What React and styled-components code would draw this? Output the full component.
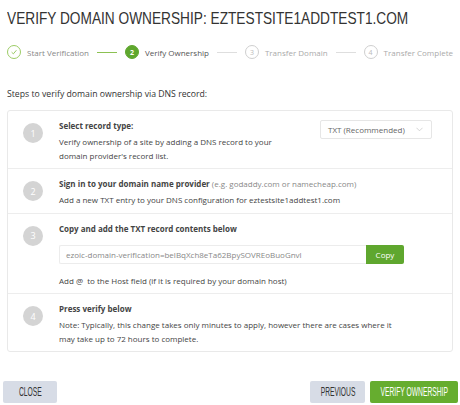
import React from "react";
import styled, { createGlobalStyle } from "styled-components";

const GlobalStyle = createGlobalStyle`
  body {
    margin: 0;
    background: #fff;
    font-family: "Open Sans", "Liberation Sans", sans-serif;
    color: #444;
  }
`;

const Page = styled.div`
  width: 460px;
  padding: 0 7px;
  box-sizing: border-box;
`;

const Title = styled.h1`
  margin: 9px 0 0;
  font-family: "Liberation Sans", sans-serif;
  font-weight: 400;
  font-size: 17px;
  line-height: 20px;
  color: #333;
  white-space: nowrap;
  transform: scaleX(0.805);
  transform-origin: left center;
`;

const Stepper = styled.div`
  display: flex;
  align-items: center;
  margin-top: 15px;
  height: 16px;
`;

const Step = styled.div`
  display: flex;
  align-items: center;
  gap: 6px;
  font-size: 8px;
  white-space: nowrap;
  color: ${(p) => (p.$state === "active" ? "#555" : p.$state === "done" ? "#888" : "#aaa")};
`;

const StepCircle = styled.span`
  width: 14px;
  height: 14px;
  box-sizing: border-box;
  border-radius: 50%;
  display: flex;
  align-items: center;
  justify-content: center;
  font-size: 7px;
  border: 1px solid
    ${(p) => (p.$state === "done" ? "#9ccc65" : p.$state === "active" ? "#5fa72e" : "#cfcfcf")};
  background: ${(p) => (p.$state === "active" ? "#5fa72e" : "#fff")};
  color: ${(p) => (p.$state === "active" ? "#fff" : "#bbb")};
  font-weight: ${(p) => (p.$state === "active" ? 700 : 400)};
`;

const Connector = styled.span`
  flex: 1;
  height: 1px;
  margin: 0 8px;
  background: ${(p) => (p.$done ? "#8cc152" : "#dedede")};
`;

const Intro = styled.p`
  margin: 28px 0 0;
  font-size: 8.7px;
  line-height: 13px;
  color: #333;
`;

const Card = styled.div`
  margin-top: 9px;
  border: 1px solid #e9e9e9;
  border-radius: 3px;
`;

const Row = styled.div`
  display: flex;
  align-items: flex-start;
  padding: 8px 20px 6px 15px;
  border-top: ${(p) => (p.$first ? "none" : "1px solid #ededed")};
`;

const Num = styled.span`
  flex: none;
  width: 20px;
  height: 20px;
  margin-top: 4px;
  border-radius: 50%;
  background: #d4d4d4;
  color: #fff;
  font-size: 9px;
  display: flex;
  align-items: center;
  justify-content: center;
`;

const Body = styled.div`
  flex: 1;
  margin-left: 16px;
  font-size: 8px;
  line-height: 13px;
  color: #444;
`;

const RowTitle = styled.div`
  font-weight: 700;
  color: #444;
  margin-bottom: 3px;
`;

const Hint = styled.span`
  font-weight: 400;
  color: #888;
`;

const Text = styled.div`
  max-width: ${(p) => p.$max || "345px"};
  line-height: 13.5px;
`;

const Split = styled.div`
  display: flex;
  justify-content: space-between;
  align-items: flex-start;
`;

const Select = styled.div`
  flex: none;
  width: 112px;
  height: 19px;
  box-sizing: border-box;
  margin-top: 1px;
  border: 1px solid #e6e6e6;
  border-radius: 2px;
  display: flex;
  align-items: center;
  justify-content: space-between;
  padding: 0 8px 0 7px;
  font-size: 8px;
  color: #666;
  background: #fff;
`;

const CopyRow = styled.div`
  display: flex;
  margin: 10px 0 10px;
  width: 345px;
`;

const Field = styled.div`
  flex: 1;
  height: 19px;
  box-sizing: border-box;
  border: 1px solid #ececec;
  border-right: none;
  border-radius: 2px 0 0 2px;
  padding: 0 6px;
  display: flex;
  align-items: center;
  font-size: 8px;
  color: #888;
`;

const CopyButton = styled.button`
  width: 38px;
  height: 19px;
  border: none;
  border-radius: 0 2px 2px 0;
  background: #5fa72e;
  color: #fff;
  font-family: "Open Sans", sans-serif;
  font-size: 8px;
  padding: 0;
`;

const Footer = styled.div`
  display: flex;
  align-items: center;
  margin: 29px -5px 0 -4px;
`;

const Button = styled.button`
  height: 22px;
  padding: 0;
  width: ${(p) => p.$w};
  border: none;
  border-radius: 2px;
  background: ${(p) => (p.$primary ? "#66ad2f" : "#d7dce6")};
  color: ${(p) => (p.$primary ? "#fff" : "#333")};
  font-family: "Liberation Sans", sans-serif;
  font-size: 12px;
  display: flex;
  align-items: center;
  justify-content: center;
  overflow: visible;
  white-space: nowrap;
  margin-left: ${(p) => p.$ml || "0"};
`;

const Label = styled.span`
  display: inline-block;
  transform: scaleX(0.56);
  transform-origin: center;
`;

const Spacer = styled.div`
  flex: 1;
`;

function Check() {
  return (
    <svg width="8" height="8" viewBox="0 0 10 10">
      <polyline points="2,5.2 4.2,7.3 8,2.8" fill="none" stroke="#8cc152" strokeWidth="1.1" />
    </svg>
  );
}

function Chevron() {
  return (
    <svg width="7" height="5" viewBox="0 0 8 5">
      <polyline points="0.5,0.5 4,4 7.5,0.5" fill="none" stroke="#c4c4c4" strokeWidth="0.8" />
    </svg>
  );
}

const steps = [
  { label: "Start Verification", state: "done" },
  { label: "Verify Ownership", state: "active" },
  { label: "Transfer Domain", state: "todo" },
  { label: "Transfer Complete", state: "todo" },
];

export default function App() {
  return (
    <Page>
      <GlobalStyle />
      <Title>VERIFY DOMAIN OWNERSHIP: EZTESTSITE1ADDTEST1.COM</Title>

      <Stepper>
        {steps.map((s, i) => (
          <React.Fragment key={s.label}>
            {i > 0 && <Connector $done={i === 1} />}
            <Step $state={s.state}>
              <StepCircle $state={s.state}>
                {s.state === "done" ? <Check /> : i + 1}
              </StepCircle>
              {s.label}
            </Step>
          </React.Fragment>
        ))}
      </Stepper>

      <Intro>Steps to verify domain ownership via DNS record:</Intro>

      <Card>
        <Row $first>
          <Num>1</Num>
          <Body>
            <Split>
              <div>
                <RowTitle>Select record type:</RowTitle>
                <Text $max="225px">
                  Verify ownership of a site by adding a DNS record to your domain provider's record list.
                </Text>
              </div>
              <Select>
                TXT (Recommended)
                <Chevron />
              </Select>
            </Split>
          </Body>
        </Row>

        <Row>
          <Num>2</Num>
          <Body>
            <RowTitle>
              Sign in to your domain name provider <Hint>(e.g. godaddy.com or namecheap.com)</Hint>
            </RowTitle>
            <Text>Add a new TXT entry to your DNS configuration for eztestsite1addtest1.com</Text>
          </Body>
        </Row>

        <Row>
          <Num>3</Num>
          <Body>
            <RowTitle>Copy and add the TXT record contents below</RowTitle>
            <CopyRow>
              <Field>ezoic-domain-verification=belBqXch8eTa62BpySOVREoBuoGnvl</Field>
              <CopyButton>Copy</CopyButton>
            </CopyRow>
            <Text>Add @&nbsp; to the Host field (if it is required by your domain host)</Text>
          </Body>
        </Row>

        <Row>
          <Num>4</Num>
          <Body>
            <RowTitle>Press verify below</RowTitle>
            <Text>
              Note: Typically, this change takes only minutes to apply, however there are cases where it may take up to 72 hours to complete.
            </Text>
          </Body>
        </Row>
      </Card>

      <Footer>
        <Button $w="54px"><Label>CLOSE</Label></Button>
        <Spacer />
        <Button $w="55px"><Label>PREVIOUS</Label></Button>
        <Button $w="88px" $primary $ml="5px"><Label>VERIFY OWNERSHIP</Label></Button>
      </Footer>
    </Page>
  );
}
